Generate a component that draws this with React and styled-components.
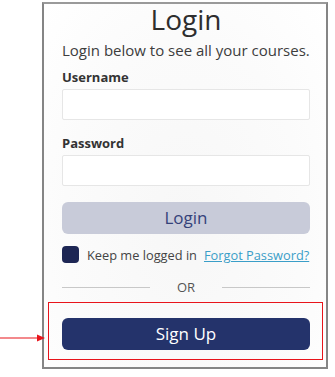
import styled, { createGlobalStyle } from "styled-components";

const GlobalStyle = createGlobalStyle`
  html, body {
    margin: 0;
    padding: 0;
    background: #ffffff;
    font-family: "Open Sans", "Noto Sans", sans-serif;
  }
`;

const Page = styled.div`
  position: relative;
  width: 335px;
  height: 377px;
  padding: 2px 0 0 42px;
  box-sizing: border-box;
`;

const Panel = styled.div`
  width: 286px;
  height: 367px;
  box-sizing: border-box;
  border: 2px solid #858585;
  border-top-color: #9a9a9a;
  background: radial-gradient(ellipse at 50% 60%, #f7f7f7 0%, #fbfbfb 60%, #ffffff 100%);
  padding: 0 16px 0 18px;
  display: flex;
  flex-direction: column;
`;

const Title = styled.h1`
  margin: 1px 0 0;
  font-size: 28px;
  line-height: 28px;
  font-weight: 400;
  color: #2e2e2e;
  text-align: center;
`;

const Subtitle = styled.p`
  margin: 7px 0 0;
  font-size: 15px;
  line-height: 20px;
  color: #3d3d3d;
  white-space: nowrap;
`;

const Label = styled.label`
  display: block;
  margin-top: ${(p) => p.$top}px;
  font-size: 13px;
  line-height: 18px;
  font-weight: 700;
  color: #333333;
`;

const Input = styled.input`
  display: block;
  width: 100%;
  height: 31px;
  margin-top: 3px;
  box-sizing: border-box;
  border: 1px solid #e6e6e6;
  border-radius: 2px;
  background: #ffffff;
  outline: none;
`;

const Button = styled.button`
  display: block;
  width: 100%;
  height: 32px;
  border: none;
  border-radius: 6px;
  font-family: inherit;
  font-size: 17px;
  line-height: 32px;
  padding: 0;
  background: ${(p) => (p.$primary ? "#24336b" : "#c8cbd9")};
  color: ${(p) => (p.$primary ? "#ffffff" : "#35427a")};
`;

const LoginButton = styled(Button)`
  margin-top: 16px;
`;

const RememberRow = styled.div`
  display: flex;
  align-items: center;
  margin-top: 12px;
  height: 17px;
  font-size: 12.8px;
  white-space: nowrap;
`;

const Check = styled.span`
  width: 17px;
  height: 17px;
  border-radius: 4px;
  background: #1d2654;
  flex-shrink: 0;
`;

const RememberText = styled.span`
  margin-left: 8px;
  color: #444444;
`;

const Forgot = styled.a`
  margin-left: 7px;
  color: #3a9ec8;
  text-decoration: underline;
`;

const Divider = styled.div`
  display: flex;
  align-items: center;
  margin-top: 16px;
  height: 16px;
  font-size: 13px;
  color: #555555;
`;

const Rule = styled.span`
  flex: 1;
  height: 1px;
  background: #c8c8c8;
`;

const OrText = styled.span`
  width: 72px;
  text-align: center;
`;

const Highlight = styled.div`
  margin: 7px -13px 0 -14px;
  border: 1.5px solid #e8141b;
  padding: 15px 12px 9px 13px;
`;

const Arrow = styled.svg`
  position: absolute;
  left: 0;
  top: 332px;
`;

export default function App() {
  return (
    <>
      <GlobalStyle />
      <Page>
        <Panel>
          <Title>Login</Title>
          <Subtitle>Login below to see all your courses.</Subtitle>
          <Label $top={8}>Username</Label>
          <Input type="text" />
          <Label $top={14}>Password</Label>
          <Input type="password" />
          <LoginButton>Login</LoginButton>
          <RememberRow>
            <Check />
            <RememberText>Keep me logged in</RememberText>
            <Forgot href="#">Forgot Password?</Forgot>
          </RememberRow>
          <Divider>
            <Rule />
            <OrText>OR</OrText>
            <Rule />
          </Divider>
          <Highlight>
            <Button $primary>Sign Up</Button>
          </Highlight>
        </Panel>
        <Arrow width="46" height="12" viewBox="0 0 46 12">
          <line x1="0" y1="6" x2="38" y2="6" stroke="#e8141b" strokeWidth="1.2" />
          <polygon points="37,2.5 45,6 37,9.5" fill="#e8141b" />
        </Arrow>
      </Page>
    </>
  );
}
